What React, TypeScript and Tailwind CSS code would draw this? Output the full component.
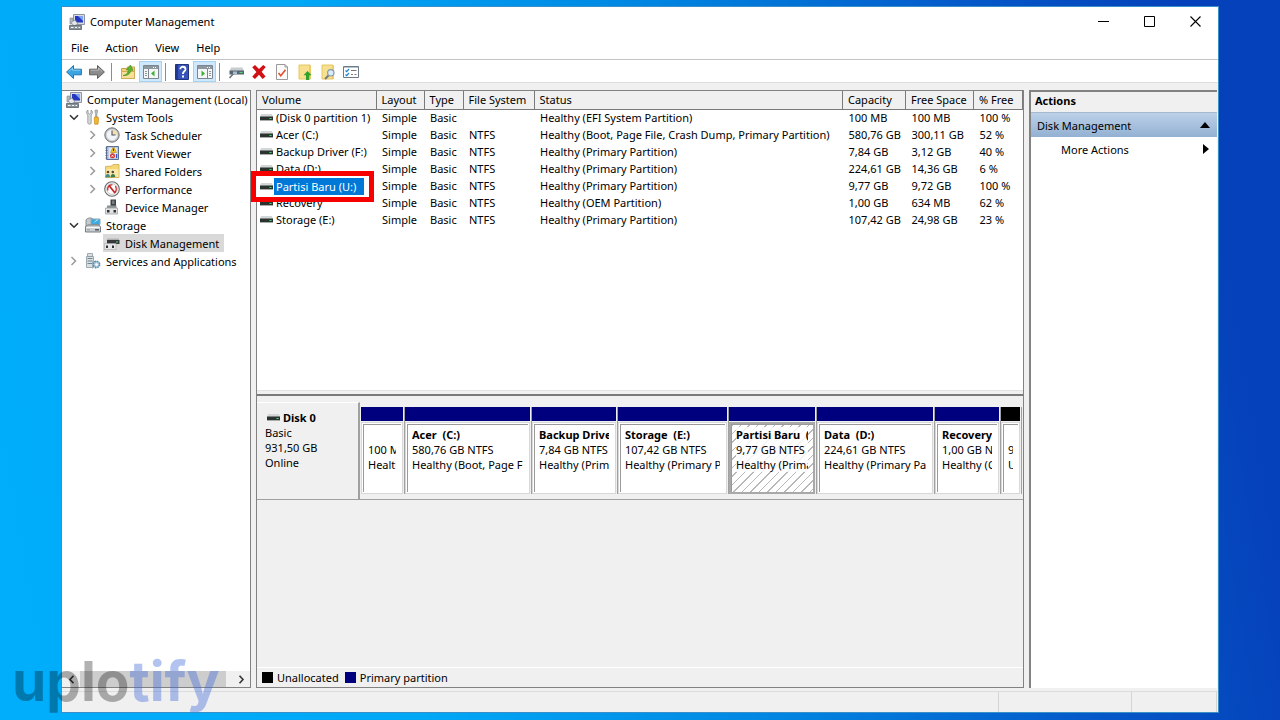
import type { ReactNode } from 'react'

type Volume = {
  name: string
  fs: string
  status: string
  capacity: string
  free: string
  percent: string
  selected?: boolean
}

const VOLUMES: Volume[] = [
  { name: '(Disk 0 partition 1)', fs: '', status: 'Healthy (EFI System Partition)', capacity: '100 MB', free: '100 MB', percent: '100 %' },
  { name: 'Acer (C:)', fs: 'NTFS', status: 'Healthy (Boot, Page File, Crash Dump, Primary Partition)', capacity: '580,76 GB', free: '300,11 GB', percent: '52 %' },
  { name: 'Backup Driver (F:)', fs: 'NTFS', status: 'Healthy (Primary Partition)', capacity: '7,84 GB', free: '3,12 GB', percent: '40 %' },
  { name: 'Data (D:)', fs: 'NTFS', status: 'Healthy (Primary Partition)', capacity: '224,61 GB', free: '14,36 GB', percent: '6 %' },
  { name: 'Partisi Baru (U:)', fs: 'NTFS', status: 'Healthy (Primary Partition)', capacity: '9,77 GB', free: '9,72 GB', percent: '100 %', selected: true },
  { name: 'Recovery', fs: 'NTFS', status: 'Healthy (OEM Partition)', capacity: '1,00 GB', free: '634 MB', percent: '62 %' },
  { name: 'Storage (E:)', fs: 'NTFS', status: 'Healthy (Primary Partition)', capacity: '107,42 GB', free: '24,98 GB', percent: '23 %' },
]

const PARTITIONS = [
  { name: '', size: '100 MB', status: 'Healthy (EFI System Partition)', share: 44 },
  { name: 'Acer  (C:)', size: '580,76 GB NTFS', status: 'Healthy (Boot, Page File, Crash Dump)', share: 127 },
  { name: 'Backup Driver  (F:)', size: '7,84 GB NTFS', status: 'Healthy (Primary Partition)', share: 86 },
  { name: 'Storage  (E:)', size: '107,42 GB NTFS', status: 'Healthy (Primary Partition)', share: 111 },
  { name: 'Partisi Baru  (U:)', size: '9,77 GB NTFS', status: 'Healthy (Primary Partition)', share: 88, selected: true },
  { name: 'Data  (D:)', size: '224,61 GB NTFS', status: 'Healthy (Primary Partition)', share: 118 },
  { name: 'Recovery', size: '1,00 GB NTFS', status: 'Healthy (OEM Partition)', share: 66 },
  { name: '', size: '9 MB', status: 'Unallocated', share: 21, unallocated: true },
]

const TOTAL_SHARE = PARTITIONS.reduce((sum, partition) => sum + partition.share, 0)

const COLUMNS = [
  { label: 'Volume', width: 'w-[119px]' },
  { label: 'Layout', width: 'w-[48px]' },
  { label: 'Type', width: 'w-[39px]' },
  { label: 'File System', width: 'w-[71px]' },
  { label: 'Status', width: '' },
  { label: 'Capacity', width: 'w-[63px]' },
  { label: 'Free Space', width: 'w-[68px]' },
  { label: '% Free', width: 'w-[49px]' },
]

const MENUS = ['File', 'Action', 'View', 'Help']

export default function App() {
  return (
    <div className="relative flex h-screen flex-col bg-[linear-gradient(80deg,#00aefb_0%,#00a8f6_30%,#0086e2_55%,#0558c8_78%,#0541ba_93%)] px-[61px] pt-[6px] pb-[7px] font-['Noto_Sans',sans-serif] text-[11px] leading-[15px] text-black">
      <div className="flex min-h-0 flex-1 flex-col border border-[#3a8fc8] bg-[#f0f0f0]">
        <TitleBar />
        <MenuBar />
        <Toolbar />
        <main className="flex min-h-0 flex-1 gap-[5px] pt-[7px]">
          <ConsoleTree />
          <DiskView />
          <ActionsPane />
        </main>
        <footer className="mt-[3px] flex h-[21px] shrink-0 border-t border-[#dcdcdc] pr-px">
          <div className="flex-1" />
          <div className="w-[133px] border-l border-[#d5d5d5]" />
          <div className="w-[86px] border-x border-[#d5d5d5]" />
        </footer>
      </div>

      <div className="pointer-events-none absolute bottom-0 left-3 z-20 font-['Inter',sans-serif] text-[55px] leading-[78px] font-bold" aria-hidden>
        <span className="text-black/30">uplo</span>
        <span className="text-[#4169d9]/40">tify</span>
      </div>
    </div>
  )
}

function TitleBar() {
  return (
    <header className="flex h-[29px] shrink-0 items-center bg-white pl-[7px]">
      <ComputerIcon />
      <h1 className="ml-[5px] flex-1">Computer Management</h1>
      <button type="button" aria-label="Minimize" className="flex h-full w-[46px] items-center justify-center">
        <svg width="11" height="11" viewBox="0 0 11 11" stroke="#000"><path d="M0 5.5h11" /></svg>
      </button>
      <button type="button" aria-label="Maximize" className="flex h-full w-[46px] items-center justify-center">
        <svg width="11" height="11" viewBox="0 0 11 11" fill="none" stroke="#000"><path d="M.5.5h10v10H.5z" /></svg>
      </button>
      <button type="button" aria-label="Close" className="flex h-full w-[46px] items-center justify-center">
        <svg width="11" height="11" viewBox="0 0 11 11" fill="none" stroke="#000" strokeWidth="1.1"><path d="M.5.5l10 10M10.5.5l-10 10" /></svg>
      </button>
    </header>
  )
}

function MenuBar() {
  return (
    <nav className="flex h-[24px] shrink-0 items-center gap-px border-b border-[#c4c4c4] bg-white pb-px pl-px">
      {MENUS.map(menu => (
        <button key={menu} type="button" className="px-2">{menu}</button>
      ))}
    </nav>
  )
}

function Toolbar() {
  return (
    <div role="toolbar" className="flex h-[23px] shrink-0 items-end border-b border-[#dedede] bg-white">
      <ToolButton label="Back"><ArrowIcon fill="#3aa5e0" stroke="#2276ae" /></ToolButton>
      <ToolButton label="Forward"><ArrowIcon fill="#8c8c8c" stroke="#5e5e5e" flip /></ToolButton>
      <Separator />
      <ToolButton label="Up one level"><FolderUpIcon /></ToolButton>
      <ToolButton label="Show console tree" active><PaneIcon side="left" /></ToolButton>
      <Separator />
      <ToolButton label="Help"><HelpIcon /></ToolButton>
      <ToolButton label="Show action pane" active><PaneIcon side="right" /></ToolButton>
      <Separator />
      <ToolButton label="Rescan disks"><RescanIcon /></ToolButton>
      <ToolButton label="Delete">
        <svg width="16" height="16" viewBox="0 0 16 16" fill="#d30f16"><path d="M1.2 3.2 4 1l4 4.1L12.2 1l2.6 2-4.2 4.800 4 4.800-3 2.400L8 10.700l-4 4.300-2.800-2.200 4.200-4.900z" /></svg>
      </ToolButton>
      <ToolButton label="Properties">
        <svg width="16" height="16" viewBox="0 0 16 16" fill="none"><path d="M2.5.5H11l2.5 2.500v12.500h-11z" fill="#fafafa" stroke="#9a9a9a" /><path d="M11 .5V3h2.500" stroke="#9a9a9a" /><path d="m4.500 9 2.300 2.700 4.700-6" stroke="#e2502e" strokeWidth="1.600" /></svg>
      </ToolButton>
      <ToolButton label="Open folder">
        <svg width="16" height="16" viewBox="0 0 16 16"><path d="M2 1h11v14H2z" fill="#f7e08f" stroke="#e4c661" /><path d="M12.500 1.500h1.500V15h-2" fill="#ecca66" /><path d="M10.500 7 6.500 11.200H9V16h3.200v-4.800h2.500z" fill="#2fa12d" /></svg>
      </ToolButton>
      <ToolButton label="Find">
        <svg width="16" height="16" viewBox="0 0 16 16"><path d="M2 1h11v14H2z" fill="#f7e08f" stroke="#e4c661" /><path d="M12.500 1.500h1.500V15h-2" fill="#ecca66" /><path d="m9 11-4 4" stroke="#77797c" strokeWidth="2" /><circle cx="10.800" cy="8.800" r="3.200" fill="#d9ecf8" stroke="#8799a8" strokeWidth="1.200" /></svg>
      </ToolButton>
      <ToolButton label="View settings">
        <svg width="16" height="16" viewBox="0 0 16 16" fill="none"><path d="M.5 2.500h15v11H.5z" fill="#fff" stroke="#6c7a89" /><path d="M1 3.500h14" stroke="#b8c2cc" /><path d="m2.500 6.500 1.200 1.200L6 5M2.500 10.500l1.200 1.200L6 9" stroke="#1e82d2" strokeWidth="1.200" /><path d="M8 6.500h5.500M8 10.500h2M11.500 10.500h2" stroke="#777" /></svg>
      </ToolButton>
    </div>
  )
}

function ToolButton({ label, active, children }: { label: string; active?: boolean; children: ReactNode }) {
  return (
    <button
      type="button"
      aria-label={label}
      className={`flex h-[21px] w-[23px] shrink-0 items-center justify-center ${active ? 'border border-[#a5d3f4] bg-[#cfe8fb]' : ''}`}
    >
      {children}
    </button>
  )
}

function Separator() {
  return <span className="mx-[3px] mb-px h-[18px] w-[2px] border-l border-[#8c8c8c]" />
}

function ConsoleTree() {
  return (
    <aside className="flex w-[189px] shrink-0 flex-col border-t border-r border-b border-[#828282] bg-white">
      <ul role="tree" className="flex-1 overflow-hidden">
        <li className="flex h-[17px] items-center gap-[5px] pl-1">
          <ComputerIcon />
          <span className="whitespace-nowrap">Computer Management (Local)</span>
        </li>
        <TreeItem label="System Tools" arrow="open" icon={<ToolsIcon />} />
        <TreeItem nested label="Task Scheduler" arrow="closed" icon={<ClockIcon />} />
        <TreeItem nested label="Event Viewer" arrow="closed" icon={<EventIcon />} />
        <TreeItem nested label="Shared Folders" arrow="closed" icon={<SharedIcon />} />
        <TreeItem nested label="Performance" arrow="closed" icon={<GaugeIcon />} />
        <TreeItem nested label="Device Manager" icon={<DeviceIcon />} />
        <TreeItem label="Storage" arrow="open" icon={<StorageIcon />} />
        <TreeItem nested selected label="Disk Management" icon={<DiskIcon />} />
        <TreeItem label="Services and Applications" arrow="closed" icon={<ServicesIcon />} />
      </ul>
      <div className="flex h-[16px] shrink-0 items-center bg-[#f0f0f0]">
        <button type="button" aria-label="Scroll left" className="flex w-[18px] justify-center">
          <svg width="7" height="9" viewBox="0 0 7 9" fill="none" stroke="#333" strokeWidth="1.600"><path d="M5.500.8 2 4.500l3.500 3.700" /></svg>
        </button>
        <div className="flex h-full flex-1"><div className="h-full w-24/25 bg-[#cdcdcd]" /></div>
        <button type="button" aria-label="Scroll right" className="flex w-[18px] justify-center">
          <svg width="7" height="9" viewBox="0 0 7 9" fill="none" stroke="#333" strokeWidth="1.600"><path d="M1.500.8 5 4.500 1.500 8.200" /></svg>
        </button>
      </div>
    </aside>
  )
}

type TreeItemProps = {
  label: string
  icon: ReactNode
  arrow?: 'open' | 'closed'
  nested?: boolean
  selected?: boolean
}

function TreeItem({ label, icon, arrow, nested, selected }: TreeItemProps) {
  return (
    <li role="treeitem" className={`flex h-[18px] items-center gap-1 ${nested ? 'pl-6' : 'pl-[5px]'}`}>
      <span className="flex w-[13px] justify-center">
        {arrow === 'open' && <svg width="10" height="7" viewBox="0 0 10 7" fill="none" stroke="#333" strokeWidth="1.600"><path d="m1 1.200 4 4 4-4" /></svg>}
        {arrow === 'closed' && <svg width="7" height="10" viewBox="0 0 7 10" fill="none" stroke="#9a9a9a" strokeWidth="1.500"><path d="m1.500 1 4 4-4 4" /></svg>}
      </span>
      <span className={`flex h-full items-center gap-[5px] px-px whitespace-nowrap ${selected ? 'bg-[#d9d9d9] pr-[5px]' : ''}`}>
        {icon}
        <span>{label}</span>
      </span>
    </li>
  )
}

function DiskView() {
  return (
    <section className="flex min-w-0 flex-1 flex-col border-t border-r border-b border-l border-[#828282]">
      <div className="flex-1 border-b border-[#e3e3e3] bg-white">
        <table className="w-full table-fixed border-collapse text-left whitespace-nowrap">
          <thead>
            <tr className="h-[18px] bg-[#f0f0f0]">
              {COLUMNS.map(column => (
                <th key={column.label} className={`border-r border-b border-[#7a7a7a] p-0 pl-[5px] font-normal ${column.width}`}>
                  {column.label}
                </th>
              ))}
            </tr>
          </thead>
          <tbody>
            {VOLUMES.map(volume => (
              <tr key={volume.name} className="h-[17px]">
                <td className="p-0">
                  {volume.selected ? (
                    <div className="relative h-[17px]">
                      <div className="absolute -top-[6px] -left-[6px] z-10 flex h-[31px] w-[123px] items-center border-[5px] border-[#f60000] bg-white pl-1">
                        <DriveIcon />
                        <span className="ml-px bg-[#0078d7] pr-2 pl-[2px] leading-[17px] text-white">{volume.name}</span>
                      </div>
                    </div>
                  ) : (
                    <div className="flex items-center gap-[3px] pl-[3px]">
                      <DriveIcon />
                      <span>{volume.name}</span>
                    </div>
                  )}
                </td>
                <td className="p-0 pl-[6px]">Simple</td>
                <td className="p-0 pl-[6px]">Basic</td>
                <td className="p-0 pl-[6px]">{volume.fs}</td>
                <td className="p-0 pl-[6px]">{volume.status}</td>
                <td className="p-0 pl-[6px]">{volume.capacity}</td>
                <td className="p-0 pl-[6px]">{volume.free}</td>
                <td className="p-0 pl-[6px]">{volume.percent}</td>
              </tr>
            ))}
          </tbody>
        </table>
      </div>
      <div className="h-[5px] shrink-0 border-b-2 border-[#7a7a7a]" />

      <div className="mt-[6px] flex h-[98px] shrink-0 border-b border-[#a0a0a0]">
        <div className="w-[103px] shrink-0 border-t border-r-2 border-t-white border-r-[#a0a0a0] pt-[7px] pl-2">
          <div className="flex items-center gap-[3px] pl-[2px] font-bold"><DriveIcon />Disk 0</div>
          <div>Basic</div>
          <div>931,50 GB</div>
          <div>Online</div>
        </div>
        <div className="flex min-w-0 flex-1 pt-[5px] pr-px pb-[5px] pl-px">
          {PARTITIONS.map(partition => {
            const lineClass = `block overflow-hidden whitespace-pre h-[15px] ${partition.selected ? 'bg-white/85' : ''}`
            return (
              <div
                key={partition.share}
                className="flex min-w-0 flex-col border-r border-[#a0a0a0] pr-px"
                style={{ width: `${(partition.share / TOTAL_SHARE) * 100}%` }}
              >
                <div className={`h-[14px] shrink-0 ${partition.unallocated ? 'bg-black' : 'bg-[#00007f]'}`} />
                <div className={`mt-px flex min-h-0 flex-1 ${partition.selected ? 'border-2 border-[#a9a9a9]' : 'border border-[#d8d8d8] bg-white p-px'}`}>
                  <div
                    className={`min-w-0 flex-1 overflow-hidden border-t border-l border-[#9a9a9a] pt-[2px] pr-[5px] pl-1 ${
                      partition.selected ? 'bg-[repeating-linear-gradient(135deg,#b8b8b8_0px,#b8b8b8_1px,#fff_1px,#fff_6px)]' : 'bg-white'
                    }`}
                  >
                    <span className={`font-bold ${lineClass}`}>{partition.name}</span>
                    <span className={lineClass}>{partition.size}</span>
                    <span className={lineClass}>{partition.status}</span>
                  </div>
                </div>
              </div>
            )
          })}
        </div>
      </div>

      <div className="h-[167px] shrink-0" />
      <div className="flex h-[20px] shrink-0 items-center border-t border-white pl-[5px]">
        <span className="mr-1 h-[11px] w-[11px] bg-black" />
        Unallocated
        <span className="mr-1 ml-[6px] h-[11px] w-[11px] bg-[#00007f]" />
        Primary partition
      </div>
    </section>
  )
}

function ActionsPane() {
  return (
    <aside className="mr-px w-[188px] shrink-0 border-t-2 border-l-2 border-[#828282] bg-white">
      <h2 className="h-[20px] bg-[#f0f0f0] pl-1 leading-[18px] font-bold">Actions</h2>
      <button type="button" className="flex h-[25px] w-full items-center justify-between border-t border-[#a6b9cd] bg-linear-to-b from-[#bcd1e9] to-[#93b0d2] pr-[7px] pl-[6px]">
        Disk Management
        <svg width="10" height="6" viewBox="0 0 10 6"><path d="M0 6 5 0l5 6z" /></svg>
      </button>
      <button type="button" className="flex h-[24px] w-full items-center justify-between pr-2 pl-[30px]">
        More Actions
        <svg width="6" height="10" viewBox="0 0 6 10"><path d="M0 0v10l6-5z" /></svg>
      </button>
    </aside>
  )
}

function DriveIcon() {
  return (
    <svg className="shrink-0" width="13" height="7" viewBox="0 0 13 7">
      <path d="M1 0h11l1 3H0z" fill="#d3d7d7" />
      <path d="M0 2.500h13V6H0z" fill="#2b3331" />
      <path d="M9.500 4h2v1h-2z" fill="#46e06a" />
      <path d="M0 6h13v1H0z" fill="#a9aead" />
    </svg>
  )
}

function ComputerIcon() {
  return (
    <svg className="shrink-0" width="16" height="16" viewBox="0 0 16 16">
      <path d="M4.500.5h11v10h-11z" fill="#d9dce2" stroke="#8d93a3" />
      <path d="M6 2h8v6.500H6z" fill="#2437c0" />
      <path d="m9 2 5 5V2z" fill="#7fa2f4" />
      <path d="M1 4h3v6H1z" fill="#b2b8c0" stroke="#818890" strokeWidth=".6" />
      <path d="M2 8.500 6 6l3 4-4 2z" fill="#e7e9ec" stroke="#7d848e" strokeWidth=".7" />
      <path d="M.5 11.500h12v4H.5z" fill="#8a9299" stroke="#596168" strokeWidth=".8" />
      <path d="M2 13.500h2.500M6 13.500h2M9.500 13.500H11" stroke="#f2f4f5" />
    </svg>
  )
}

function ArrowIcon({ fill, stroke, flip }: { fill: string; stroke: string; flip?: boolean }) {
  return (
    <svg className={flip ? '-scale-x-100' : ''} width="16" height="14" viewBox="0 0 16 14">
      <path d="M.6 7 7.500.5v3.700h7.900v5.600H7.500v3.700z" fill={fill} stroke={stroke} strokeLinejoin="round" />
      <path d="M2.800 6.500 6.500 3v2.200h7.900" fill="none" stroke="#fff" strokeOpacity=".4" />
    </svg>
  )
}

function FolderUpIcon() {
  return (
    <svg width="16" height="16" viewBox="0 0 16 16">
      <path d="M1.500 4.500h5l1-1.500h7v11.500h-13z" fill="#f2d27a" stroke="#c9a24a" />
      <path d="M1.500 7.500h13v7h-13z" fill="#f8e09b" stroke="#d2ac55" />
      <path d="M3 11.500C6.500 11 8 9 8.500 6L6.300 5.800 10.500 1 13 6.300l-2-.1c-.7 3.600-3.500 5.800-8 5.300z" fill="#5cb531" stroke="#3f8b22" strokeWidth=".6" />
    </svg>
  )
}

function PaneIcon({ side }: { side: 'left' | 'right' }) {
  return (
    <svg width="16" height="14" viewBox="0 0 16 14">
      <path d="M.5.5h15v13H.5z" fill="#f5f6f7" stroke="#7d868e" />
      <path d="M1 1h14v3H1z" fill="#8d979f" />
      <path d="M10 2.500h1M12 2.500h1" stroke="#fff" />
      {side === 'left' ? (
        <>
          <path d="M5.500 4v9.500" stroke="#7d868e" />
          <path d="M2 6.500h2M2 8.500h2M2 10.500h2" stroke="#8d979f" />
          <path d="M11.500 5.500v6L8 8.500z" fill="#3eb035" />
        </>
      ) : (
        <>
          <path d="M10.500 4v9.500" stroke="#7d868e" />
          <path d="M12 6.500h2M12 8.500h2M12 10.500h2" stroke="#8d979f" />
          <path d="M4.500 5.500v6L8 8.500z" fill="#3eb035" />
        </>
      )}
    </svg>
  )
}

function HelpIcon() {
  return (
    <svg width="14" height="16" viewBox="0 0 14 16">
      <path d="M.5.5h13v15H.5z" fill="#3553b8" stroke="#22347e" />
      <path d="M1 1h2v14H1z" fill="#24388f" />
      <path d="M5.300 5.200c0-3.300 5.200-3.200 5.200 0 0 2.200-2.600 2-2.600 4.800" fill="none" stroke="#fff" strokeWidth="1.800" />
      <path d="M7 11.500h2v2H7z" fill="#fff" />
    </svg>
  )
}

function RescanIcon() {
  return (
    <svg width="16" height="16" viewBox="0 0 16 16">
      <path d="M3 3.500h11.500L16 7H1.500z" fill="#c8cdd0" />
      <path d="M1.500 6.500H16v4H1.500z" fill="#59656c" />
      <path d="M11.500 8h3v1h-3z" fill="#4bdc6a" />
      <path d="m6 9-4.500 5" stroke="#6d7479" strokeWidth="1.600" />
      <path d="M5 7.500h4v2.500H5z" fill="#9fc0d8" />
    </svg>
  )
}

function ToolsIcon() {
  return (
    <svg width="16" height="16" viewBox="0 0 16 16">
      <path d="M3 1v3l1.500 1L6 4V1c1.800.8 2 3.800.2 5v8c0 1.600-3.400 1.600-3.400 0V6C1 4.800 1.200 1.800 3 1z" fill="#d5d9db" stroke="#8e9497" strokeWidth=".8" />
      <path d="M10.300 1h2l.4 2-.8 1.500V8h-1.300V4.500L9.900 3z" fill="#b9bec1" stroke="#82898c" strokeWidth=".6" />
      <path d="M9.500 8h3.600l.4 2-.5 5.200H9.700L9.200 10z" fill="#f2b632" stroke="#c98b16" strokeWidth=".7" />
    </svg>
  )
}

function ClockIcon() {
  return (
    <svg width="16" height="16" viewBox="0 0 16 16">
      <circle cx="8" cy="8" r="7.200" fill="#b4b8bb" stroke="#74797c" />
      <circle cx="8" cy="8" r="5.600" fill="#f2f6fa" stroke="#d2d6d8" />
      <path d="M8 8h5.200A5.200 5.200 0 0 0 8 2.800z" fill="#f4dcae" />
      <path d="M8 3.500V8h3.500" fill="none" stroke="#4a5966" strokeWidth="1.100" />
    </svg>
  )
}

function EventIcon() {
  return (
    <svg width="16" height="16" viewBox="0 0 16 16">
      <path d="M2.500 1.500h12v13h-12z" fill="#b9c9e8" stroke="#5e6f96" />
      <path d="M5 3h8v10H5z" fill="#dfe8f7" />
      <path d="M1.500 3h2M1.500 5.500h2M1.500 8h2M1.500 10.500h2M1.500 13h2" stroke="#5a6270" />
      <path d="m9.500 1.500 3 6h-6z" fill="#f2c51c" stroke="#b58c0f" strokeWidth=".6" />
      <path d="M9.500 3.500v2.500" stroke="#333" />
      <circle cx="8.500" cy="10.800" r="2.500" fill="#d6322c" />
      <path d="m7.500 9.800 2 2m0-2-2 2" stroke="#fff" strokeWidth=".8" />
      <path d="M12.500 9v4" stroke="#2c5ccb" strokeWidth="1.200" />
    </svg>
  )
}

function SharedIcon() {
  return (
    <svg width="16" height="16" viewBox="0 0 16 16">
      <path d="M1.500 3.500 8 3l1-1.500h6v13H1.500z" fill="#f5d777" stroke="#d2a94a" strokeWidth=".8" />
      <path d="M2.500 6h12v8h-12z" fill="#fae8a7" />
      <circle cx="4" cy="9" r="1.300" fill="#54463a" />
      <circle cx="8.800" cy="9" r="1.300" fill="#54463a" />
      <path d="M1.500 14.500c0-4.500 4.500-4.500 4.500-.5z" fill="#3b8a95" />
      <path d="M6.500 14.500c0-4.500 4.800-4.500 4.800-.5z" fill="#3f7d4f" />
    </svg>
  )
}

function GaugeIcon() {
  return (
    <svg width="16" height="16" viewBox="0 0 16 16" fill="none">
      <circle cx="8" cy="8" r="7.300" fill="#f4f4f4" stroke="#6a6a6a" strokeWidth="1.100" />
      <circle cx="8" cy="8" r="5.300" fill="#fff" stroke="#c7c7c7" />
      <path d="M3.800 9.500C3 5.500 6 3.300 8.500 4M11 11.500c1.800-2 1.600-5 .2-6.200" stroke="#c92626" strokeWidth="1.200" />
      <path d="m5 4.500 6 7.500" stroke="#c92626" strokeWidth="1.800" />
    </svg>
  )
}

function DeviceIcon() {
  return (
    <svg width="16" height="16" viewBox="0 0 16 16">
      <path d="M6.500.5h5.500V8H6.500z" fill="#3f4245" />
      <path d="M8 1.500h2.500V5H8z" fill="#777c80" />
      <path d="M3 6.500h9.500V9H3z" fill="#8b9093" />
      <path d="M1.500 9h12v6h-12z" fill="#e0e2e3" stroke="#9da1a4" strokeWidth=".8" />
      <path d="M3 11h2.500v2.500H3zM9.500 11H12v2.500H9.500z" fill="#2f3234" />
    </svg>
  )
}

function StorageIcon() {
  return (
    <svg width="16" height="16" viewBox="0 0 16 16">
      <path d="M1 3c1-2.500 6-2.500 7-1v8H1z" fill="#c3c9cc" stroke="#7b8387" strokeWidth=".9" />
      <path d="M6 2h9v5.500H6z" fill="#3aa7dd" stroke="#8fa7b4" />
      <path d="m8 6.500 3.500-4H14z" fill="#a7defa" />
      <path d="M.5 10 2.500 8H14l1.500 2v5H.5z" fill="#c9ced0" stroke="#6c7377" strokeWidth=".9" />
      <path d="M1 10.500h14" stroke="#f7f8f8" />
      <path d="M10 12.800h4" stroke="#49515a" strokeWidth="1.400" />
      <path d="M2 12.800h3" stroke="#9ca2a5" />
    </svg>
  )
}

function DiskIcon() {
  return (
    <svg width="16" height="16" viewBox="0 0 16 16">
      <path d="M3 3.500h12V5H3z" fill="#aeb2b4" />
      <path d="M3 5h12.500v4H3z" fill="#35393b" />
      <path d="M12 6.500h2v1h-2z" fill="#58d873" />
      <path d="M.5 8.500h11.500v6H.5z" fill="#e6e7e8" stroke="#a4a8aa" strokeWidth=".6" />
      <path d="M2 10.500h2V13H2zM8 10.500h2V13H8z" fill="#2f3234" />
    </svg>
  )
}

function ServicesIcon() {
  return (
    <svg width="16" height="16" viewBox="0 0 16 16">
      <path d="M2.500.5h5v3h-5zM1.500 3.500h7v11h-7z" fill="#d9e0e3" stroke="#8e999e" strokeWidth=".8" />
      <path d="M2.500 5.500h5M2.500 8h5M2.500 10.500h5" stroke="#6e8794" />
      <path d="M7.500 15.500v-7h5" fill="none" stroke="#a3aeb3" />
      <circle cx="11.500" cy="11.500" r="3.200" fill="#a9cbe0" stroke="#5e8ca8" strokeDasharray="1.600 .9" strokeWidth="1.500" />
      <circle cx="11.500" cy="11.500" r="1.200" fill="#fff" />
    </svg>
  )
}
